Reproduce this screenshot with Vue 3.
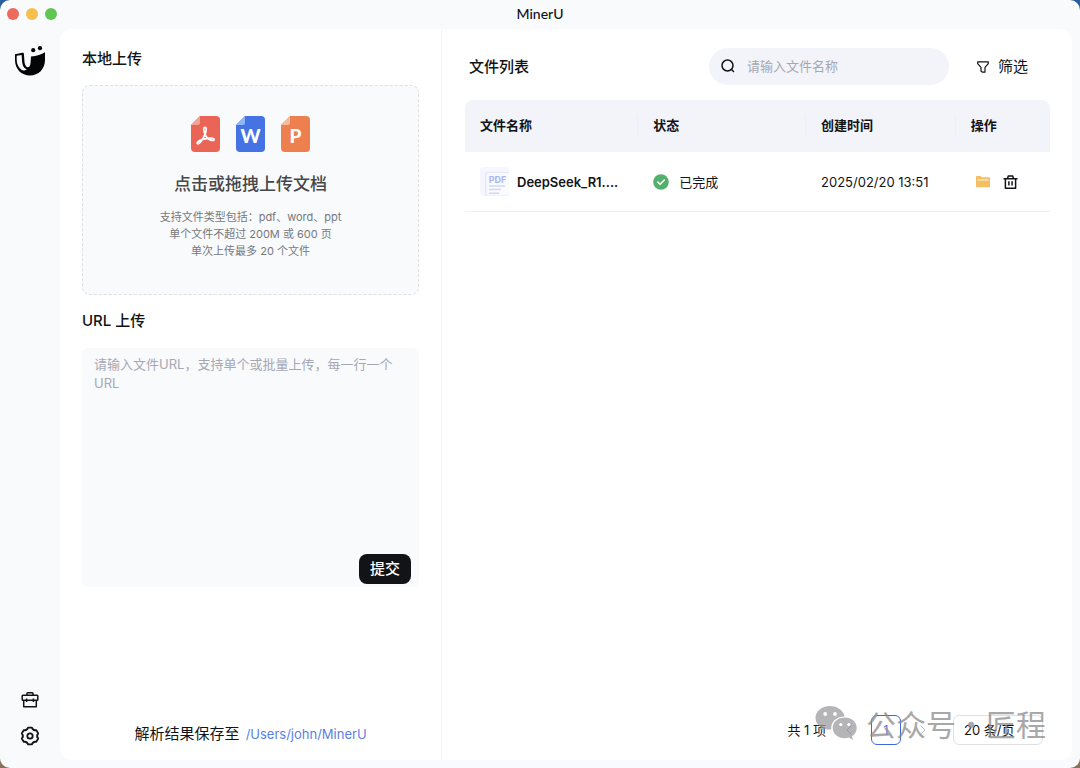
<script setup>
import { ref } from 'vue'

const urls = ref('')
const keyword = ref('')
const pageSize = ref(20)
const columns = ['文件名称', '状态', '创建时间', '操作']
const files = [{ name: 'DeepSeek_R1.pdf', short: 'DeepSeek_R1....', status: '已完成', created: '2025/02/20 13:51' }]
const hints = ['支持文件类型包括：pdf、word、ppt', '单个文件不超过 200M 或 600 页', '单次上传最多 20 个文件']
</script>

<template>
  <div class="desktop">
    <div class="window">
      <header class="titlebar">
        <div class="lights">
          <button class="light close" aria-label="关闭"></button>
          <button class="light minimize" aria-label="最小化"></button>
          <button class="light zoom" aria-label="缩放"></button>
        </div>
        <h1>MinerU</h1>
      </header>

      <div class="body">
        <nav class="sidebar">
          <a href="#" class="logo" aria-label="MinerU">
            <svg width="32" height="32" viewBox="0 0 32 32">
              <path d="M1 9.2 8.4 7.8C9.4 7.6 9.8 8.2 9.9 9L10.5 17C10.8 20 12 21.8 13.6 22.3 15.6 22.1 16.4 20.4 16.600 17.200L17 11.400C23 11 27.500 9.600 31 7.200V15C31 24 24.500 30.500 16 30.500 7.300 30.500 1 24 1 15Z" fill="#050505" />
              <path d="M2.700 10.800 7.600 9.900 8.200 17.600C8.600 21.400 10.300 23.700 12.800 24.300 11.300 25.500 9.200 26 7.700 25.100 4.500 22.700 2.800 19.100 2.700 15Z" fill="#f9fafc" />
              <circle cx="19.200" cy="5.200" r="2.100" fill="#050505" />
              <circle cx="26" cy="3.200" r="2.100" fill="#050505" />
            </svg>
          </a>
          <div class="tools">
            <button class="icon-btn" aria-label="工具箱">
              <svg width="18" height="18" viewBox="0 0 18 18" fill="none" stroke="#121316" stroke-width="1.500" stroke-linejoin="round">
                <rect x="1.200" y="4.200" width="15.600" height="5" rx=".800" />
                <path d="M2.700 9.400v6.300h12.600V9.400M6 4V2.600q0-.8.8-.8h4.400q.8 0 .8.800V4M5.600 7.600v3.300M12.400 7.600v3.300" />
              </svg>
            </button>
            <button class="icon-btn" aria-label="设置">
              <svg width="20" height="20" viewBox="0 0 20 20" fill="none" stroke="#121316" stroke-width="1.800" stroke-linejoin="round">
                <path d="M8.100 1.600H11.900Q13.400 5 16.300 4.100L18.200 7.500Q15.900 10 18.200 12.500L16.300 15.900Q13.400 15 11.900 18.400H8.100Q6.600 15 3.700 15.900L1.800 12.500Q4.100 10 1.800 7.500L3.700 4.100Q6.600 5 8.100 1.600Z" />
                <circle cx="10" cy="10" r="2.700" />
              </svg>
            </button>
          </div>
        </nav>

        <main class="content">
          <section class="upload">
            <h2>本地上传</h2>
            <button class="dropzone">
              <span class="types">
                <svg width="29" height="36" viewBox="0 0 29 36">
                  <path d="M9 0H25a4 4 0 0 1 4 4V32a4 4 0 0 1-4 4H4a4 4 0 0 1-4-4V9Z" fill="#eb6557" />
                  <path d="M9 0V6.500A2.500 2.500 0 0 1 6.500 9H0Z" fill="#f3a296" />
                  <path d="M13.700 11.300c2.300-.3 1.700 3.700.3 6.900-1.700 3.900-4.300 9.400-7.100 9.600-2.200-.4.500-3.300 4.700-4.400 4.300-1.200 10.900-2.200 11.500 0 .2 2-4.300 1-6.300-1-2.600-2.300-5.600-10.700-3.100-11.100Z" fill="none" stroke="#fff" stroke-width="1.700" />
                </svg>
                <svg width="29" height="36" viewBox="0 0 29 36">
                  <path d="M9 0H25a4 4 0 0 1 4 4V32a4 4 0 0 1-4 4H4a4 4 0 0 1-4-4V9Z" fill="#4673e3" />
                  <path d="M9 0V6.500A2.500 2.500 0 0 1 6.500 9H0Z" fill="#90b6f7" />
                  <text x="14.500" y="27" class="letter">W</text>
                </svg>
                <svg width="29" height="36" viewBox="0 0 29 36">
                  <path d="M9 0H25a4 4 0 0 1 4 4V32a4 4 0 0 1-4 4H4a4 4 0 0 1-4-4V9Z" fill="#ee8050" />
                  <path d="M9 0V6.500A2.500 2.500 0 0 1 6.500 9H0Z" fill="#f6ba9c" />
                  <text x="14.500" y="27" class="letter">P</text>
                </svg>
              </span>
              <span class="drop-title">点击或拖拽上传文档</span>
              <span v-for="h in hints" :key="h" class="hint">{{ h }}</span>
            </button>

            <h2><label for="urls">URL 上传</label></h2>
            <div class="url-box">
              <textarea id="urls" v-model="urls" placeholder="请输入文件URL，支持单个或批量上传，每一行一个URL"></textarea>
              <button class="submit">提交</button>
            </div>

            <p class="save">解析结果保存至 <a href="#">/Users/john/MinerU</a></p>
          </section>

          <section class="list">
            <div class="list-head">
              <h2>文件列表</h2>
              <div class="search">
                <svg width="14" height="14" viewBox="0 0 14 14" fill="none" stroke="#121316" stroke-width="1.500" stroke-linecap="round">
                  <circle cx="6.500" cy="6.500" r="5.500" />
                  <path d="M10.800 10.800l1.700 1.700" />
                </svg>
                <input v-model="keyword" type="search" placeholder="请输入文件名称" aria-label="请输入文件名称" />
              </div>
              <button class="filter">
                <svg width="12" height="12" viewBox="0 0 12 12" fill="none" stroke="#121316" stroke-width="1.200" stroke-linejoin="round">
                  <path d="M.7.800H11.300V2.600L8 6.300V11.200H5.500L4 10V6.300L.7 2.600Z" />
                </svg>
                筛选
              </button>
            </div>

            <table>
              <colgroup>
                <col class="c-name" />
                <col class="c-status" />
                <col class="c-time" />
                <col />
              </colgroup>
              <thead>
                <tr>
                  <th v-for="c in columns" :key="c" scope="col"><div class="th">{{ c }}</div></th>
                </tr>
              </thead>
              <tbody>
                <tr v-for="f in files" :key="f.name">
                  <td>
                    <div class="cell name">
                      <svg width="29" height="29" viewBox="0 0 29 29">
                        <rect width="29" height="29" rx="4" fill="#f6f7fe" />
                        <path d="M5 7q0-2 2-2h22v20q0 4-4 4H5Z" fill="#e4e8fc" />
                        <path d="M6.500 8q0-2 2-2h20.500v18.500q0 4-4 4h-18.500Z" fill="#fafbff" />
                        <text x="17.500" y="15.500" class="pdf">PDF</text>
                        <path d="M9.500 19h15M9.500 22.600h11M9.500 26.200h9" stroke="#d0d7fa" stroke-width="1.500" stroke-linecap="round" />
                      </svg>
                      <span :title="f.name">{{ f.short }}</span>
                    </div>
                  </td>
                  <td>
                    <div class="cell status">
                      <svg width="16" height="16" viewBox="0 0 16 16">
                        <circle cx="8" cy="8" r="7.800" fill="#52b06c" />
                        <path d="M4.800 8l2.300 2.300 4.200-4.300" fill="none" stroke="#fff" stroke-width="1.600" stroke-linecap="round" stroke-linejoin="round" />
                      </svg>
                      {{ f.status }}
                    </div>
                  </td>
                  <td>{{ f.created }}</td>
                  <td>
                    <div class="cell actions">
                      <button class="icon-btn" aria-label="打开文件夹">
                        <svg width="14" height="12" viewBox="0 0 14 12">
                          <path d="M0 .8Q0 0 .8 0H4.500L6 1.300H13.200Q14 1.300 14 2.100V10.500Q14 11.300 13.200 11.300H.8Q0 11.300 0 10.500Z" fill="#f4be64" />
                          <path d="M1.500 4h11" stroke="#fff6df" stroke-width="1" />
                        </svg>
                      </button>
                      <button class="icon-btn" aria-label="删除">
                        <svg width="15" height="14" viewBox="0 0 15 14" fill="none" stroke="#121316" stroke-width="1.500" stroke-linejoin="round">
                          <path d="M.5 3.700h14M4.500 3.500 5.300 1h4.400l.8 2.500M2.400 3.800v9.400h10.200V3.800M5.900 6.300v4.200M9.100 6.300v4.200" />
                        </svg>
                      </button>
                    </div>
                  </td>
                </tr>
              </tbody>
            </table>

            <footer class="pager">
              <span class="total">共 1 项</span>
              <button class="arrow" aria-label="上一页">
                <svg width="6" height="10" viewBox="0 0 6 10" fill="none" stroke="#8e8e90"><path d="M5.500.5 1 5l4.500 4.500" /></svg>
              </button>
              <button class="page" aria-current="page">1</button>
              <button class="arrow" aria-label="下一页">
                <svg width="6" height="10" viewBox="0 0 6 10" fill="none" stroke="#bcbcbe"><path d="M.5.5 5 5 .5 9.500" /></svg>
              </button>
              <select v-model="pageSize" aria-label="每页条数">
                <option :value="20">20 条/页</option>
              </select>
            </footer>
          </section>
        </main>
      </div>

      <div class="watermark">
        <svg width="42" height="36" viewBox="0 0 42 36">
          <path d="M15 1C6.700 1 .5 6.200.5 12.900c0 3.800 2 7 5.200 9.200L4.300 26.300l5-2.600c1.700.5 3.600.9 5.700.9h1.300C15.400 17 21.500 11.300 29.700 11.400 28.300 5.300 22.400 1 15 1Z" fill="#9d9d9f" />
          <path d="M29.800 12.600C23 12.600 17.700 17.200 17.700 22.900S23 33.200 29.800 33.200c1.500 0 2.900-.2 4.200-.6l4 2.400-1-3.700c2.900-1.900 4.700-4.900 4.700-8.400 0-5.700-5.200-10.300-11.900-10.300Z" fill="#9d9d9f" />
          <circle cx="10.200" cy="9" r="1.900" fill="#fff" />
          <circle cx="20" cy="9" r="1.900" fill="#fff" />
          <circle cx="25.800" cy="19.500" r="1.600" fill="#fff" />
          <circle cx="33.800" cy="19.500" r="1.600" fill="#fff" />
        </svg>
        <span>公众号·匠程</span>
      </div>
    </div>
  </div>
</template>

<style>
body { background: #86745a; }
</style>

<style scoped>
* { box-sizing: border-box; }
.desktop {
  display: flex;
  min-height: 100vh;
  background: linear-gradient(#2b5c9e 50%, #86745a 50%);
  font-family: Inter, "Noto Sans CJK SC", sans-serif;
  font-size: 13px;
  line-height: 20px;
  color: #121316;
}
.window {
  position: relative;
  flex: 1;
  display: flex;
  flex-direction: column;
  background: #f9fafc;
  border-radius: 10px;
}
button, input, textarea, select {
  font: inherit;
  color: inherit;
  background: none;
  border: 0;
  margin: 0;
  padding: 0;
}
button { cursor: pointer; }
svg { display: block; flex: none; }
a { color: #5b7fe6; text-decoration: none; }
h2 { margin: 0; font-size: 15px; line-height: 24px; font-weight: 500; }

.titlebar {
  display: grid;
  grid-template-columns: 1fr auto 1fr;
  align-items: center;
  height: 29px;
  padding: 0 7px 2px;
}
.lights { display: flex; gap: 7px; }
.light { width: 12px; height: 12px; border-radius: 50%; }
.close { background: #ed6a5e; }
.minimize { background: #f5bf4f; }
.zoom { background: #61c554; }
h1 {
  margin: 0;
  font: 500 14px/20px Lato, Inter, sans-serif;
}

.body { flex: 1; display: flex; padding: 0 8px 8px 0; }
.sidebar {
  width: 60px;
  display: flex;
  flex-direction: column;
  justify-content: space-between;
  align-items: center;
  padding: 16px 0 14px;
}
.tools { display: flex; flex-direction: column; align-items: center; gap: 17px; }
.content { flex: 1; display: flex; background: #fff; border-radius: 12px; }

.upload {
  flex: none;
  width: 382px;
  display: flex;
  flex-direction: column;
  padding: 18px 22px 14px;
  border-right: 1px solid #f2f3f5;
}
.dropzone {
  display: flex;
  flex-direction: column;
  align-items: center;
  margin: 14px 0;
  padding: 30px 0 34px;
  border: 1px dashed #dfe0e2;
  border-radius: 8px;
  background: #f9fafc;
}
.types { display: flex; gap: 16px; }
.letter {
  font: 900 19px Lato, sans-serif;
  fill: #fff;
  text-anchor: middle;
}
.drop-title {
  margin: 19px 0 12px;
  font-size: 17px;
  line-height: 26px;
  font-weight: 500;
  color: #464749;
}
.hint { font-size: 11px; line-height: 17px; color: #77787b; }
.url-box {
  position: relative;
  height: 239px;
  margin-top: 15px;
  background: #f9fafc;
  border-radius: 6px;
}
textarea {
  display: block;
  width: 100%;
  height: 100%;
  padding: 7px 12px;
  line-height: 19px;
  resize: none;
  outline: 0;
}
::placeholder { color: #a5a8b4; opacity: 1; }
.submit {
  position: absolute;
  right: 8px;
  bottom: 3px;
  width: 52px;
  height: 30px;
  border-radius: 8px;
  background: #121316;
  color: #fff;
  font-size: 15px;
  font-weight: 500;
}
.save { margin: auto 0 0; font-size: 15px; line-height: 24px; text-align: center; }
.save a { margin-left: 2px; font-size: 13px; }

.list {
  flex: 1;
  min-width: 0;
  display: flex;
  flex-direction: column;
  padding: 19px 22px 15px 23px;
}
.list-head { display: flex; align-items: center; padding: 0 22px 0 4px; margin-bottom: 15px; }
.search {
  display: flex;
  align-items: center;
  gap: 12px;
  width: 240px;
  height: 37px;
  margin-left: auto;
  padding: 0 12px 2px;
  border-radius: 19px;
  background: #f3f4f9;
}
.search input { flex: 1; min-width: 0; outline: 0; appearance: none; }
.filter { display: flex; align-items: center; gap: 9px; margin-left: 28px; font-size: 15px; }

table { width: 100%; table-layout: fixed; border-spacing: 0; }
.c-name { width: 29.6%; }
.c-status { width: 28.7%; }
.c-time { width: 25.6%; }
th { height: 52px; padding: 0 0 2px; background: #f3f4f9; font-weight: 600; text-align: left; }
th:first-child { border-top-left-radius: 8px; }
th:last-child { border-top-right-radius: 8px; }
.th { padding-left: 15px; border-right: 1px solid #eeeff4; }
th:last-child .th { border-right: 0; }
td { height: 60px; padding: 0 0 0 15px; border-bottom: 1px solid #eff0f1; white-space: nowrap; }
.cell { display: flex; align-items: center; }
.name { gap: 8px; font-weight: 600; }
.pdf { font: 700 9px Inter, sans-serif; fill: #a9b5f5; text-anchor: middle; }
.status { gap: 10px; }
.actions { gap: 13px; padding-left: 5px; }

.pager { display: flex; align-items: center; justify-content: flex-end; margin-top: auto; padding-right: 7px; }
.total { margin-right: 8px; }
.arrow { width: 30px; height: 30px; margin: 0 7px; display: grid; place-items: center; }
.total + .arrow { margin: 0 7px 0 0; }
.page {
  width: 30px;
  height: 30px;
  border: 1px solid #3f68dc;
  border-radius: 6px;
  color: #5b7fe6;
}
select {
  width: 90px;
  height: 30px;
  margin-left: 8px;
  padding: 0 10px;
  border: 1px solid #e0e0e2;
  border-radius: 6px;
  appearance: none;
}
.watermark {
  position: absolute;
  right: 34px;
  bottom: 23px;
  display: flex;
  align-items: center;
  gap: 9px;
  font-family: "Noto Sans CJK SC", sans-serif;
  font-size: 30px;
  line-height: 44px;
  color: #8c8c8e;
  opacity: 0.75;
  pointer-events: none;
}
</style>
